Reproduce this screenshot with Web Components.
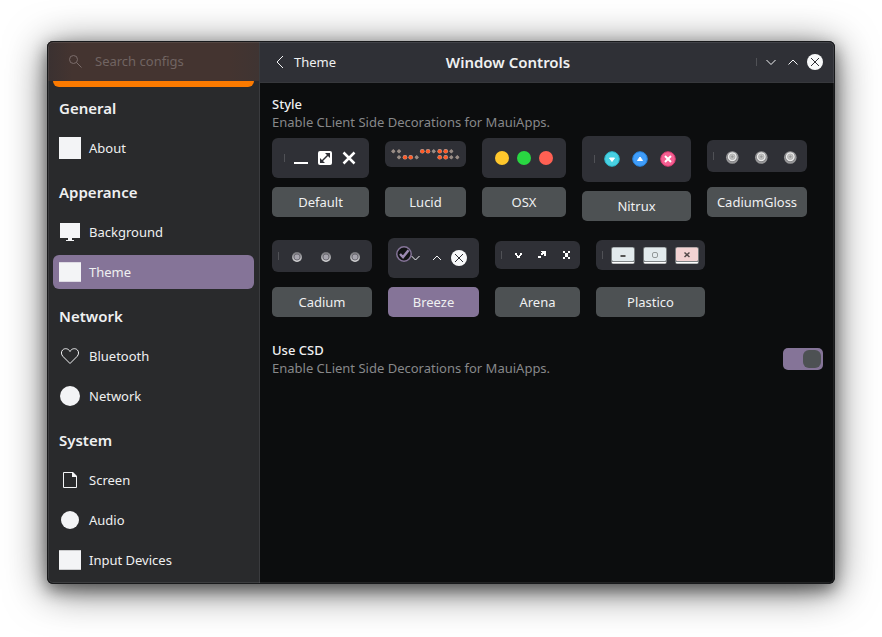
<!DOCTYPE html>
<html lang="en">
<head>
<meta charset="utf-8">
<meta name="viewport" content="width=device-width, initial-scale=1">
<title>Window Controls</title>
<style>
  html { background: #fff; }
  body { margin: 0; font: 13px/18px "Noto Sans", "Open Sans", sans-serif; color: #eff0f1; }
</style>
</head>
<body>
<settings-window>
  <side-bar slot="sidebar">
    <nav-section heading="General">
      <nav-item icon="square">About</nav-item>
    </nav-section>
    <nav-section heading="Apperance">
      <nav-item icon="monitor">Background</nav-item>
      <nav-item icon="panel" current>Theme</nav-item>
    </nav-section>
    <nav-section heading="Network">
      <nav-item icon="heart">Bluetooth</nav-item>
      <nav-item icon="disc">Network</nav-item>
    </nav-section>
    <nav-section heading="System">
      <nav-item icon="page">Screen</nav-item>
      <nav-item icon="dot">Audio</nav-item>
      <nav-item icon="panel">Input Devices</nav-item>
    </nav-section>
  </side-bar>
  <page-header slot="header" back="Theme">Window Controls</page-header>
  <setting-block heading="Style" note="Enable CLient Side Decorations for MauiApps."></setting-block>
  <style-grid>
    <style-option kind="default">Default</style-option>
    <style-option kind="lucid">Lucid</style-option>
    <style-option kind="osx">OSX</style-option>
    <style-option kind="nitrux">Nitrux</style-option>
    <style-option kind="gloss">CadiumGloss</style-option>
    <style-option kind="cadium">Cadium</style-option>
    <style-option kind="breeze" selected>Breeze</style-option>
    <style-option kind="arena">Arena</style-option>
    <style-option kind="plastico">Plastico</style-option>
  </style-grid>
  <setting-block heading="Use CSD" note="Enable CLient Side Decorations for MauiApps.">
    <toggle-switch label="Use CSD" checked></toggle-switch>
  </setting-block>
</settings-window>

<script>
const define = (name, render) => customElements.define(name, class extends HTMLElement {
  connectedCallback() {
    if (this.shadowRoot) return;
    const t = document.createElement('template');
    t.innerHTML = render(this);
    this.attachShadow({ mode: 'open' }).append(t.content.cloneNode(true));
  }
});

define('settings-window', () => `
<style>
  :host { display: flex; box-sizing: border-box; min-height: 100vh; padding: 41px 47px 53px; }
  .frame { flex: 1; display: flex; position: relative; border-radius: 6px; overflow: hidden; background: #0c0d0e; }
  .shadow { flex: 1; display: flex; border-radius: 6px;
    box-shadow: 0 6px 16px rgba(0,0,0,.45), 0 6px 40px rgba(0,0,0,.6); }
  .frame::after { content: ""; position: absolute; inset: 0; border: 1px solid #18191b; border-radius: 6px;
    box-shadow: inset 0 0 0 1px rgba(255,255,255,.09); pointer-events: none; }
  .main { flex: 1; min-width: 0; display: flex; flex-direction: column; }
  main { padding: 12px; }
</style>
<div class="shadow"><div class="frame">
  <slot name="sidebar"></slot>
  <div class="main"><slot name="header"></slot><main><slot></slot></main></div>
</div></div>`);

define('side-bar', () => `
<style>
  :host { display: flex; flex-direction: column; flex: none; width: 213px; background: #292a2c; box-shadow: inset -1px 0 #3a3b3e; }
  .search { display: flex; align-items: center; gap: 13px; height: 40px; padding: 0 12px 0 22px; margin-right: 1px;
    background: linear-gradient(90deg, #3a3131, #443430 12%, #443430 86%, #3f3432); }
  svg { flex: none; }
  input { flex: 1; min-width: 0; border: 0; outline: 0; padding: 0; background: none; font: inherit; color: #c8bebc; }
  input::placeholder { color: #716462; opacity: 1; }
  .banner { height: 6px; margin: 0 6px; background: #fb7a00; border-radius: 0 0 6px 6px; }
  nav { padding: 0 6px; }
</style>
<div class="search">
  <svg width="13" height="13" viewBox="0 0 13 13" fill="none" stroke="#7b6d6b"><circle cx="4.5" cy="4.5" r="4"/><path d="M7.5 7.5 12.5 12.5"/></svg>
  <input type="search" placeholder="Search configs" aria-label="Search configs">
</div>
<div class="banner"></div>
<nav><slot></slot></nav>`);

define('nav-section', el => `
<style>
  :host { display: block; }
  h2 { margin: 0; padding: 5px 6px 7px; font-size: 15px; line-height: 32px; font-weight: 600; }
  .items { display: flex; flex-direction: column; gap: 6px; padding-bottom: 6px; }
</style>
<h2>${el.getAttribute('heading')}</h2><div class="items"><slot></slot></div>`);

const icons = {
  square: '<path fill="#f3f4f6" d="M0 0h22v22H0z"/>',
  monitor: '<path fill="#f3f4f6" d="M1 2h20v15H1zM9 17h4v2H9zM7 19h8v1H7z"/>',
  panel: '<path fill="#f3f4f6" fill-opacity=".8" d="M0 1h22v20H0z"/><path fill="#f3f4f6" d="M0 2h22v18H0z"/>',
  heart: '<path fill="none" stroke="#f3f4f6" d="M11 18.500 4 11.500C2 9.500 2 6.500 3.700 4.900 5.800 2.900 9.300 3.300 11 6.500 12.700 3.300 16.200 2.900 18.300 4.900 20 6.500 20 9.500 18 11.500z"/>',
  disc: '<circle cx="11" cy="11" r="10" fill="#f3f4f6"/>',
  dot: '<circle cx="11" cy="11" r="9" fill="#f3f4f6"/>',
  page: '<path fill="none" stroke="#f3f4f6" d="M4.500 3.500h9l4 4v11h-13z"/><path fill="#f3f4f6" d="M13 3h1l4 4v1h-5z"/>'
};

define('nav-item', el => `
<style>
  :host { display: block; }
  a { display: flex; align-items: center; gap: 8px; height: 34px; padding: 0 6px; border-radius: 6px; color: inherit; text-decoration: none; }
  :host([current]) a { background: #857498; }
  svg { flex: none; }
</style>
<a href="#" ${el.hasAttribute('current') ? 'aria-current="page"' : ''}><svg width="22" height="22" viewBox="0 0 22 22" aria-hidden="true">${icons[el.getAttribute('icon')]}</svg><span><slot></slot></span></a>`);

define('page-header', el => `
<style>
  :host { display: flex; align-items: center; height: 41px; padding: 0 12px 0 15px; background: #2f3036; border-bottom: 1px solid #37383c; }
  button { display: flex; align-items: center; border: 0; padding: 0; background: none; font: inherit; color: inherit; }
  .back { gap: 10px; }
  h1 { flex: 1; margin: 0; padding-right: 76px; text-align: center; font-size: 15px; line-height: 20px; font-weight: 600; white-space: nowrap; }
  .controls { display: flex; align-items: center; gap: 6px; }
  .rule { width: 1px; height: 8px; background: #505156; }
  svg { fill: none; stroke: #f3f4f6; }
</style>
<button class="back"><svg width="9" height="14" viewBox="0 0 9 14"><path d="M8 1 2 7l6 6"/></svg><span>${el.getAttribute('back')}</span></button>
<h1><slot></slot></h1>
<div class="controls">
  <span class="rule"></span>
  <button aria-label="Minimize"><svg width="16" height="16" viewBox="0 0 16 16"><path d="M3.500 6 8 10.500 12.500 6"/></svg></button>
  <button aria-label="Maximize"><svg width="16" height="16" viewBox="0 0 16 16"><path d="M3.500 10.500 8 6l4.500 4.500"/></svg></button>
  <button aria-label="Close"><svg width="16" height="16" viewBox="0 0 16 16"><circle cx="8" cy="8" r="8" fill="#f8f9fa" stroke="none"/><path stroke="#2f3036" d="m4 4 8 8M12 4l-8 8"/></svg></button>
</div>`);

define('setting-block', el => `
<style>
  :host { display: flex; align-items: center; gap: 12px; }
  .text { flex: 1; }
  h2, p { margin: 0; font-size: 13px; line-height: 18px; }
  h2 { font-weight: 500; }
  p { color: #87888a; }
</style>
<div class="text"><h2>${el.getAttribute('heading')}</h2><p>${el.getAttribute('note')}</p></div><slot></slot>`);

define('style-grid', () => `
<style>
  :host { display: flex; flex-wrap: wrap; align-items: flex-start; gap: 10px 16px; padding-bottom: 24px; }
</style><slot></slot>`);

const rule = (x, y) => `<path fill="#505156" d="M${x} ${y}h1v8h-1z"/>`;
const each = (list, f) => list.map(f).join('');
const grayDot = (x, y) => `<path fill="#988c85" d="M${x} ${y - 2.2}l2.200 2.200-2.200 2.200-2.200-2.200z"/><circle cx="${x}" cy="${y}" r="1.500" fill="#988c85"/>`;
const redDot = (x, y) => `<circle cx="${x}" cy="${y}" r="2.300" fill="#b9aaa4"/><circle cx="${x}" cy="${y}" r="1.900" fill="#ff5a26"/>`;

const previews = {
  default: [97, 40, rule(12, 16) + `<path fill="#fff" d="M22 24h14v2H22z"/><rect x="46" y="13" width="14" height="14" rx="2" fill="#fff"/>
    <path stroke="#2f3036" stroke-width="1.500" fill="none" d="m49.500 23.500 7-7"/><path fill="#2f3036" d="M53 15h5v5zM48 20v5h5z"/>
    <path stroke="#fff" stroke-width="2.500" d="m71.500 14.500 11 11m0-11-11 11"/>`],
  lucid: [81, 26, each([[8.3,10.3],[14,10.3],[48.7,10.3],[66.3,10.3],[14,16.3],[31.7,16.3],[66.3,16.3],[72.3,16.3]], p => grayDot(...p))
    + each([[37.3,10.3],[43,10.3],[54.7,10.3],[60.7,10.3],[20,16.3],[25.7,16.3],[54.7,16.3],[60.7,16.3]], p => redDot(...p))],
  osx: [84, 40, each([[20,'#ffc72c'],[42,'#29d742'],[64,'#ff6053']], ([x, c]) => `<circle cx="${x}" cy="20" r="7" fill="${c}"/>`)],
  nitrux: [109, 46, rule(12, 19)
    + each([[30,'#48d1e2','#2bb6ca'],[58,'#409dfa','#2583dd'],[86,'#f55f92','#d8386f']], ([x, c, s]) => `<circle cx="${x}" cy="23" r="7.300" fill="${c}" stroke="${s}"/>`)
    + `<g fill="#fff" stroke="#fff" stroke-linejoin="round"><path d="M27.500 22h5L30 25.500zM55.500 24.500h5L58 21z"/></g><path stroke="#fff" stroke-width="2" d="m83 20 6 6m0-6-6 6"/>`],
  gloss: [100, 32, rule(6, 12) + each([25.3, 54.3, 83.3], x => `<circle cx="${x}" cy="17.500" r="6.300" fill="#98989a"/><circle cx="${x}" cy="17" r="5" fill="#77777a"/><circle cx="${x}" cy="16.700" r="4.500" fill="#ececec"/><circle cx="${x}" cy="16.700" r="2.800" fill="#c4c4c4" stroke="#a4a4a4" stroke-width=".7"/><path stroke="#929292" stroke-width=".8" d="M${x - 1.5} 16.700h3m-1.500-1.500v3"/>`)],
  cadium: [100, 32, `<defs><linearGradient id="g" x2="0" y2="1"><stop stop-color="#707075"/><stop offset="1" stop-color="#d8d8da"/></linearGradient></defs>` + rule(6, 12)
    + each([25, 54, 83], x => `<circle cx="${x}" cy="17" r="5" fill="url(#g)"/><circle cx="${x}" cy="17" r="3" fill="#a7a5ae" stroke="#6d6b74"/>`)],
  breeze: [91, 40, `<path stroke="#f3f4f6" fill="none" d="m23.500 18 4 4 4-4M45 22l4-4 4 4"/><circle cx="71" cy="20" r="8" fill="#f8f9fa"/><path stroke="#2f3036" d="m67 16 8 8m0-8-8 8"/>
    <circle cx="16" cy="16" r="7.200" fill="#121315" stroke="#857498" stroke-width="1.500"/><path fill="none" stroke="#9b89b1" stroke-width="2.500" d="m12 16 3 3.200 5.500-7"/>`],
  arena: [85, 28, rule(6, 10)
    + `<path fill="#fff" d="M20 12h2v2h-2zM25 12h2v2h-2zM21 14h2v1h-2zM24 14h2v1h-2zM22 15h3v2h-3zM46 10h5v5h-2v-2h-1v1h-2v-2h1v-1h-1zM43 15h3v2h-3z"/>
    <path fill="#fff" d="M68 10h2v2h-2zM73 10h2v2h-2zM68 16h2v2h-2zM73 16h2v2h-2zM70 12h3v4h-3z"/>`],
  plastico: [109, 30, rule(6, 11)
    + each([[15,'#e2eaed'],[47,'#e2eaed'],[79,'#f3d3d3']], ([x, c]) => `<rect x="${x}" y="7" width="24" height="17" rx="2" fill="#777b7d"/><rect x="${x + 1}" y="21" width="22" height="2.500" rx="1" fill="#fff"/><path stroke="#7e8385" d="M${x + 1} 21.500h22"/><rect x="${x + 1}" y="7.500" width="22" height="13.500" rx="1.500" fill="${c}"/>`)
    + `<path fill="#555" d="M24.500 15h5v2h-5z"/><rect x="56.500" y="12.500" width="5" height="5" rx="1.500" fill="none" stroke="#939899"/><path stroke="#554b4b" stroke-width="1.500" d="m88.500 12.500 5 4.500m0-4.500-5 4.500"/>`]
};

define('style-option', el => {
  const [w, h, art] = previews[el.getAttribute('kind')];
  return `
<style>
  :host { display: flex; flex-direction: column; }
  /* Shorter previews hang a little lower so that their buttons stay in line. */
  .preview { display: flex; justify-content: center; align-items: flex-start; box-sizing: border-box; min-height: 56px; padding-bottom: 9px;
    padding-top: round(down, calc(17px - ${h}px / 4), 1px); }
  svg { background: #2f3036; border-radius: 6px; }
  button { height: 30px; border: 0; border-radius: 5px; padding: 0 8px; background: #4d5153; color: #eff0f1; font: inherit; }
  :host([selected]) button { background: #857498; }
</style>
<div class="preview"><svg width="${w}" height="${h}" viewBox="0 0 ${w} ${h}" aria-hidden="true">${art}</svg></div>
<button aria-pressed="${el.hasAttribute('selected')}"><slot></slot></button>`;
});

define('toggle-switch', el => `
<style>
  :host { display: flex; }
  input { appearance: none; display: flex; align-items: center; box-sizing: border-box; margin: 0; width: 40px; height: 22px; padding: 0 2px; border-radius: 5px; background: #4d5153; }
  input::before { content: ""; width: 18px; height: 18px; border-radius: 6px; background: #2f3036; }
  input:checked { justify-content: flex-end; background: #857498; }
  input:checked::before { background: #4d5153; }
</style>
<input type="checkbox" role="switch" aria-label="${el.getAttribute('label')}" ${el.hasAttribute('checked') ? 'checked' : ''}>`);
</script>
</body>
</html>
